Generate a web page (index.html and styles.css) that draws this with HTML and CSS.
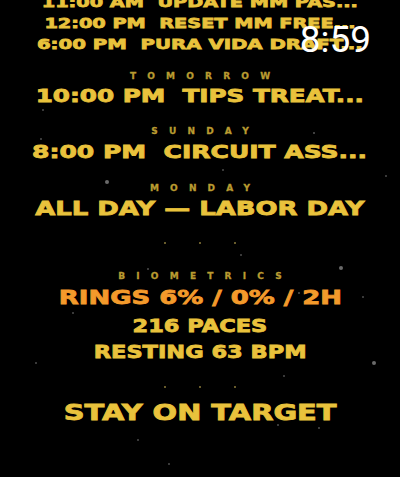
FILE: index.html
```html
<!DOCTYPE html>
<html>
<head>
<meta charset="utf-8">
<link rel="stylesheet" href="styles.css">
</head>
<body>
<div class="screen">
  <div class="stars">
    <span class="star big" style="left:105px;top:180px"></span>
    <span class="star" style="left:313px;top:132px"></span>
    <span class="star sm" style="left:40px;top:138px"></span>
    <span class="star sm" style="left:42px;top:109px"></span>
    <span class="star big" style="left:339px;top:266px"></span>
    <span class="star sm" style="left:240px;top:254px"></span>
    <span class="star" style="left:298px;top:292px"></span>
    <span class="star sm" style="left:147px;top:268px"></span>
    <span class="star big" style="left:372px;top:361px"></span>
    <span class="star sm" style="left:35px;top:362px"></span>
    <span class="star sm" style="left:137px;top:439px"></span>
    <span class="star sm" style="left:168px;top:463px"></span>
    <span class="star sm" style="left:318px;top:427px"></span>
    <span class="star sm" style="left:277px;top:424px"></span>
    <span class="star sm" style="left:283px;top:375px"></span>
    <span class="star sm" style="left:72px;top:312px"></span>
    <span class="star sm" style="left:362px;top:296px"></span>
    <span class="star sm" style="left:222px;top:169px"></span>
    <span class="star sm" style="left:385px;top:175px"></span>
  </div>

  <div class="crawl">
    <div class="line s15"><span>11:00 AM&nbsp; UPDATE MM PAS...</span></div>
    <div class="line s15"><span>12:00 PM&nbsp; RESET MM FREE...</span></div>
    <div class="line s15 wide3"><span>6:00 PM&nbsp; PURA VIDA DRAFT...</span></div>

    <div class="label gap-a">TOMORROW</div>
    <div class="line s18 gap-b"><span>10:00 PM&nbsp; TIPS TREAT...</span></div>

    <div class="label gap-c">SUNDAY</div>
    <div class="line s18w gap-b5"><span>8:00 PM&nbsp; CIRCUIT ASS...</span></div>

    <div class="label gap-c2">MONDAY</div>
    <div class="line s19 gap-b5"><span>ALL DAY — LABOR DAY</span></div>

    <div class="dots gap-d"><i></i><i></i><i></i></div>

    <div class="label gap-e">BIOMETRICS</div>
    <div class="line s19 orange gap-f"><span>RINGS 6% / 0% / 2H</span></div>
    <div class="line s18n gap-g"><span>216 PACES</span></div>
    <div class="line s18n gap-f"><span>RESTING 63 BPM</span></div>

    <div class="dots gap-h"><i></i><i></i><i></i></div>

    <div class="line s20 gap-i"><span>STAY ON TARGET</span></div>
  </div>

  <div class="clock">8:59</div>
</div>
</body>
</html>
```

FILE: styles.css
```css
html, body {
  margin: 0;
  padding: 0;
  background: #000;
}
.screen {
  position: relative;
  width: 400px;
  height: 477px;
  overflow: hidden;
  background: #000;
}
.stars {
  position: absolute;
  inset: 0;
}
.star {
  position: absolute;
  width: 2px;
  height: 2px;
  border-radius: 50%;
  background: #555;
}
.star.sm {
  width: 1.5px;
  height: 1.5px;
  background: #444;
}
.star.big {
  width: 4px;
  height: 4px;
  background: #6a6a6a;
}
.crawl {
  position: relative;
  margin-top: -8px;
  display: flex;
  flex-direction: column;
  align-items: center;
  font-family: "DejaVu Sans", sans-serif;
  font-weight: bold;
  color: #e9c23c;
}
.line {
  height: 21px;
  line-height: 21px;
  white-space: nowrap;
  display: flex;
  justify-content: center;
  width: 400px;
  -webkit-text-stroke: 0.8px currentColor;
}
.line span {
  display: inline-block;
  transform-origin: center;
}
.s15 { font-size: 14.5px; }
.s15 span { transform: scaleX(1.33); }
.s15.wide3 span { transform: scaleX(1.36); }
.s18 { font-size: 18px; height: 20px; line-height: 20px; }
.s18 span { transform: scaleX(1.37); }
.s18w { font-size: 18px; height: 20px; line-height: 20px; }
.s18w span { transform: scaleX(1.39); }
.s18n { font-size: 18px; height: 20px; line-height: 20px; }
.s18n span { transform: scaleX(1.25); }
.s19 { font-size: 19.5px; height: 20px; line-height: 20px; }
.s19 span { transform: scaleX(1.33); }
.s20 { font-size: 21px; height: 20px; line-height: 20px; }
.s20 span { transform: scaleX(1.375); }
.orange { color: #f39a2b; }
.label {
  height: 12px;
  line-height: 12px;
  font-size: 9px;
  letter-spacing: 11.2px;
  padding-left: 11.2px;
  color: #b99b30;
  -webkit-text-stroke: 0.3px currentColor;
}
.gap-a { margin-top: 15px; }
.gap-b { margin-top: 4px; }
.gap-b5 { margin-top: 5px; }
.gap-c { margin-top: 19px; }
.gap-c2 { margin-top: 20px; }
.gap-d { margin-top: 22px; }
.gap-e { margin-top: 25px; }
.gap-f { margin-top: 6px; }
.gap-g { margin-top: 8px; }
.gap-h { margin-top: 23px; }
.gap-i { margin-top: 14px; }
.dots {
  height: 4px;
  display: flex;
  align-items: center;
  gap: 33px;
}
.dots i {
  display: block;
  width: 2px;
  height: 2px;
  border-radius: 50%;
  background: #8a7a3a;
}
.clock {
  position: absolute;
  top: 17px;
  right: 29px;
  font-family: Roboto, "Open Sans", sans-serif;
  font-size: 37px;
  line-height: 46px;
  color: #fff;
}
```
